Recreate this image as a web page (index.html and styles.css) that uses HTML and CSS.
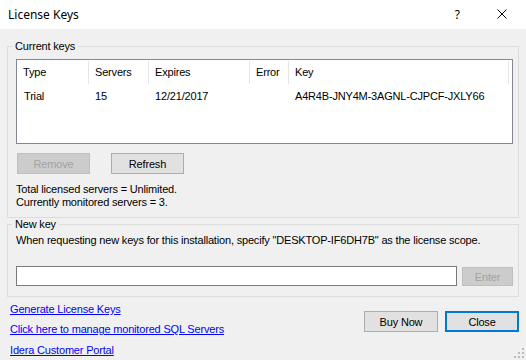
FILE: index.html
```html
<!DOCTYPE html>
<html>
<head>
  <title>License Keys</title>
  <link rel="stylesheet" href="styles.css">
</head>
<body>
  <div class="window">
    <div class="titlebar">
      <span class="title">License Keys</span>
      <span class="help">?</span>
      <svg class="closex" width="10" height="10" viewBox="0 0 10 10">
        <path d="M0.5 0.5 L9.5 9.5 M9.5 0.5 L0.5 9.5" stroke="#000" stroke-width="1" fill="none"/>
      </svg>
    </div>

    <div class="main">
      <fieldset class="group current">
        <legend>Current keys</legend>
        <div class="list">
          <div class="row head">
            <div class="cell">Type</div>
            <div class="cell">Servers</div>
            <div class="cell">Expires</div>
            <div class="cell">Error</div>
            <div class="cell">Key</div>
          </div>
          <div class="row item">
            <div class="cell">Trial</div>
            <div class="cell">15</div>
            <div class="cell">12/21/2017</div>
            <div class="cell"></div>
            <div class="cell">A4R4B-JNY4M-3AGNL-CJPCF-JXLY66</div>
          </div>
        </div>
        <div class="btnrow">
          <button class="btn" disabled>Remove</button>
          <button class="btn">Refresh</button>
        </div>
        <p class="info">Total licensed servers = Unlimited.<br>Currently monitored servers = 3.</p>
      </fieldset>

      <fieldset class="group newkey">
        <legend>New key</legend>
        <p class="hint">When requesting new keys for this installation, specify "DESKTOP-IF6DH7B" as the license scope.</p>
        <div class="keyrow">
          <input class="keyinput" type="text">
          <button class="btn enter" disabled>Enter</button>
        </div>
      </fieldset>

      <div class="footer">
        <div class="links">
          <a href="#">Generate License Keys</a>
          <a href="#">Click here to manage monitored SQL Servers</a>
          <a href="#">Idera Customer Portal</a>
        </div>
        <div class="actions">
          <button class="btn">Buy Now</button>
          <button class="btn default">Close</button>
        </div>
      </div>
    </div>

    <svg class="grip" width="12" height="12" viewBox="0 0 12 12">
      <rect x="9" y="1" width="2" height="2" fill="#bcbcbc"/>
      <rect x="9" y="5" width="2" height="2" fill="#bcbcbc"/>
      <rect x="5" y="5" width="2" height="2" fill="#bcbcbc"/>
      <rect x="9" y="9" width="2" height="2" fill="#bcbcbc"/>
      <rect x="5" y="9" width="2" height="2" fill="#bcbcbc"/>
      <rect x="1" y="9" width="2" height="2" fill="#bcbcbc"/>
    </svg>
  </div>
</body>
</html>
```

FILE: styles.css
```css
html, body {
    margin: 0;
    padding: 0;
}

body {
    font-family: "Liberation Sans", Arial, sans-serif;
    font-size: 11px;
    line-height: 13px;
    letter-spacing: -0.18px;
    color: #000;
    background: #f0f0f0;
}

.window {
    position: relative;
    width: 526px;
    height: 360px;
    overflow: hidden;
    background: #f0f0f0;
}

/* title bar */
.titlebar {
    height: 29px;
    background: #fff;
    display: flex;
    align-items: center;
    padding-left: 8px;
    letter-spacing: 0;
}
.title {
    font-family: "Noto Sans", "Open Sans", sans-serif;
    font-size: 12px;
    flex: 1;
    margin-top: -1px;
}
.help {
    font-family: "Noto Sans", sans-serif;
    font-size: 12px;
    margin-right: 37px;
    margin-top: -1px;
}
.closex {
    margin-right: 19px;
    margin-top: -1px;
}

.main {
    padding: 11px 7px 0 7px;
}

/* group boxes */
fieldset.group {
    margin: 0;
    min-width: 0;
    border: 1px solid #dcdcdc;
    padding: 6px 5px 8px 8px;
}
fieldset.group legend {
    margin-left: -4px;
    padding: 0 3px;
    line-height: 13px;
}

/* list view */
.list {
    height: 83px;
    border: 1px solid #828790;
    background: #fff;
}
.row {
    display: grid;
    grid-template-columns: 72px 60px 101px 39px 220px;
}
.row .cell {
    padding-left: 6px;
    white-space: nowrap;
}
.row.head {
    height: 25px;
    line-height: 25px;
}
.row.head .cell {
    border-right: 1px solid #e5e5e5;
    margin: 1px 0;
    line-height: 23px;
}
.row.item {
    padding-top: 5px;
}
.row.item .cell:first-child {
    padding-left: 7px;
}

/* buttons */
.btn {
    font-family: "Liberation Sans", Arial, sans-serif;
    font-size: 11px;
    letter-spacing: -0.18px;
    color: #000;
    background: #e1e1e1;
    border: 1px solid #adadad;
    border-radius: 0;
    height: 21px;
    width: 73px;
    padding: 0;
    margin: 0;
}
.btn:disabled {
    background: #cccccc;
    border-color: #bfbfbf;
    color: #a3a3a3;
}
.btn.default {
    border: 2px solid #0078d7;
}

.btnrow {
    display: flex;
    gap: 21px;
    margin: 9px 0 0 1px;
}

.info {
    margin: 9px 0 0 0;
}

/* new key */
fieldset.newkey {
    padding-top: 3px;
    padding-bottom: 10px;
}
.hint {
    margin: 0;
    white-space: nowrap;
}
.keyrow {
    display: flex;
    align-items: flex-end;
    gap: 5px;
    margin-top: 19px;
}
.keyinput {
    width: 441px;
    height: 20px;
    box-sizing: border-box;
    border: 1px solid #7a7a7a;
    background: #fff;
    margin: 0;
    padding: 0 2px;
    outline: none;
}
.btn.enter {
    width: 51px;
    height: 19px;
}

/* footer */
.footer {
    display: flex;
    justify-content: space-between;
}
.links {
    display: flex;
    flex-direction: column;
    padding: 2px 0 0 3px;
}
.links a {
    color: #0000ff;
    text-decoration: underline;
    line-height: 20px;
}
.links a:last-child {
    line-height: 22px;
}
.actions {
    display: flex;
    gap: 7px;
    margin-top: 14px;
}
.actions .btn {
    width: 74px;
}

.grip {
    position: absolute;
    right: 1px;
    bottom: 1px;
}
```
